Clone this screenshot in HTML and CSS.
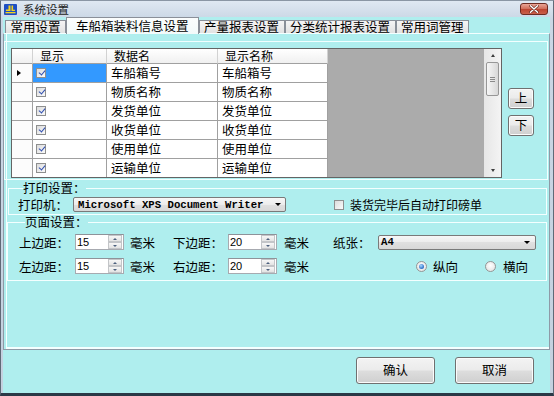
FILE: index.html
```html
<!DOCTYPE html>
<html lang="zh-CN">
<head>
<meta charset="utf-8">
<title>系统设置</title>
<link rel="stylesheet" href="styles.css">
</head>
<body>
<div class="window">
  <div class="titlebar">
    <svg class="app-icon" viewBox="0 0 13 11" width="13" height="11">
      <rect width="13" height="11" rx="1" fill="#1d4fc4"/>
      <path d="M4.5 1.5h2v5.5H2V5.6h2.5z" fill="#f4d41c"/>
      <path d="M7.5 1.5h1.6v4.2H11v1.3H7.5z" fill="#f4d41c"/>
      <rect x="1.5" y="8" width="10" height="1.3" fill="#f4d41c"/>
    </svg>
    <span class="title">系统设置</span>
    <div class="close-btn">
      <svg viewBox="0 0 10 8" width="10" height="8"><path d="M1.5 0.8l7 6.4M8.5 0.8l-7 6.4" stroke="#5a1e16" stroke-width="2.6" stroke-linecap="round"/><path d="M1.5 0.8l7 6.4M8.5 0.8l-7 6.4" stroke="#ffffff" stroke-width="1.5" stroke-linecap="round"/></svg>
    </div>
  </div>
  <div class="client">
    <div class="tabs">
      <div class="tab">常用设置</div>
      <div class="tab active">车船箱装料信息设置</div>
      <div class="tab">产量报表设置</div>
      <div class="tab">分类统计报表设置</div>
      <div class="tab">常用词管理</div>
    </div>
    <div class="tab-panel">
      <div class="grid-box">
        <div class="datagrid">
          <div class="dg-area">
            <div class="dg-table">
              <div class="hcell rowhead"></div>
              <div class="hcell">显示</div>
              <div class="hcell">数据名</div>
              <div class="hcell">显示名称</div>

              <div class="cell rowhead"><span class="row-arrow"></span></div>
              <div class="cell chk selected"><span class="cbox checked"></span></div>
              <div class="cell">车船箱号</div>
              <div class="cell">车船箱号</div>

              <div class="cell rowhead"></div>
              <div class="cell chk"><span class="cbox checked"></span></div>
              <div class="cell">物质名称</div>
              <div class="cell">物质名称</div>

              <div class="cell rowhead"></div>
              <div class="cell chk"><span class="cbox checked"></span></div>
              <div class="cell">发货单位</div>
              <div class="cell">发货单位</div>

              <div class="cell rowhead"></div>
              <div class="cell chk"><span class="cbox checked"></span></div>
              <div class="cell">收货单位</div>
              <div class="cell">收货单位</div>

              <div class="cell rowhead"></div>
              <div class="cell chk"><span class="cbox checked"></span></div>
              <div class="cell">使用单位</div>
              <div class="cell">使用单位</div>

              <div class="cell rowhead"></div>
              <div class="cell chk"><span class="cbox checked"></span></div>
              <div class="cell">运输单位</div>
              <div class="cell">运输单位</div>
            </div>
          </div>
          <div class="vscroll">
            <div class="sb-btn"><span class="tri-up"></span></div>
            <div class="sb-thumb"><span></span><span></span><span></span></div>
            <div class="sb-track"></div>
            <div class="sb-btn"><span class="tri-down"></span></div>
          </div>
        </div>
        <div class="order-btns">
          <button class="btn btn-small">上</button>
          <button class="btn btn-small">下</button>
        </div>
      </div>

      <fieldset class="group print-group">
        <legend>打印设置：</legend>
        <div class="print-row">
          <span class="lbl lbl-printer">打印机：</span>
          <div class="combo combo-printer"><span class="combo-text">Microsoft XPS Document Writer</span><span class="combo-arrow"></span></div>
          <span class="cbox plain"></span>
          <span class="chk-label">装货完毕后自动打印磅单</span>
        </div>
      </fieldset>

      <fieldset class="group page-group">
        <legend>页面设置：</legend>
        <div class="page-row">
          <span class="lbl w56">上边距：</span>
          <div class="spin"><span class="spin-val">15</span><span class="spin-btns"><span class="sp-up"></span><span class="sp-down"></span></span></div>
          <span class="unit u1">毫米</span>
          <span class="lbl w55">下边距：</span>
          <div class="spin"><span class="spin-val">20</span><span class="spin-btns"><span class="sp-up"></span><span class="sp-down"></span></span></div>
          <span class="unit u2">毫米</span>
          <span class="lbl w45">纸张：</span>
          <div class="combo combo-paper"><span class="combo-text">A4</span><span class="combo-arrow"></span></div>
        </div>
        <div class="page-row row2">
          <span class="lbl w56">左边距：</span>
          <div class="spin"><span class="spin-val">15</span><span class="spin-btns"><span class="sp-up"></span><span class="sp-down"></span></span></div>
          <span class="unit u1">毫米</span>
          <span class="lbl w55">右边距：</span>
          <div class="spin"><span class="spin-val">20</span><span class="spin-btns"><span class="sp-up"></span><span class="sp-down"></span></span></div>
          <span class="unit u2">毫米</span>
          <span class="radio-opt opt1"><span class="radio on"></span>纵向</span>
          <span class="radio-opt opt2"><span class="radio"></span>横向</span>
        </div>
      </fieldset>
    </div>
    <div class="footer">
      <button class="btn btn-big">确认</button>
      <button class="btn btn-big">取消</button>
    </div>
  </div>
</div>
</body>
</html>
```
FILE: styles.css
```css
* { box-sizing: border-box; }
html, body { margin: 0; padding: 0; }
body {
  width: 554px;
  height: 396px;
  overflow: hidden;
  font-family: "Noto Sans CJK SC", "Noto Sans", sans-serif;
  font-size: 12.5px;
  color: #000;
  background: #afeeee;
}

.window {
  width: 554px;
  height: 396px;
  display: flex;
  flex-direction: column;
  background: linear-gradient(#dfe8f2, #cad7e5 18px, #c4d1df);
  border-top: 1px solid #8a96a4;
  border-left: 1px solid #5f6a77;
  border-right: 1px solid #5f6a77;
  border-bottom: 3px solid #2b3846;
  padding: 0 3px 0 2px;
}

/* title bar */
.titlebar {
  flex: none;
  height: 16px;
  display: flex;
  align-items: center;
}
.app-icon { margin-left: 1px; flex: none; }
.title {
  margin-left: 6px;
  font-size: 11.5px;
  line-height: 14px;
  color: #1b1b1b;
}
.close-btn {
  margin-left: auto;
  margin-right: 2px;
  width: 28px;
  height: 12px;
  border: 1px solid #6e2b22;
  border-radius: 3px;
  background: linear-gradient(#eaa596, #d2725f 45%, #be4632 55%, #c9604b);
  display: flex;
  align-items: center;
  justify-content: center;
}

/* client */
.client {
  flex: 1;
  background: #afeeee;
  display: flex;
  flex-direction: column;
}

/* tabs */
.tabs {
  flex: none;
  height: 16px;
  display: flex;
  align-items: flex-end;
  padding-left: 2px;
  position: relative;
  z-index: 1;
}
.tab {
  height: 13px;
  border: 1px solid #8a9099;
  border-bottom: none;
  background: linear-gradient(#f5f5f5, #e2e2e2);
  padding: 0 4.5px;
  font-size: 12.5px;
  line-height: 12px;
  white-space: nowrap;
}
.tab.active {
  height: 17px;
  margin-bottom: -1px;
  padding: 0 9px;
  line-height: 15px;
  background: linear-gradient(#fbfdfd, #f2fafa);
}

.tab-panel {
  flex: none;
  height: 317px;
  border: 1px solid #8e9aa7;
  border-top-color: #f4ffff;
  box-shadow: inset 2px 0 0 #afeeee, inset 3px 0 0 #f4ffff, inset 0 -2px 0 #f4ffff;
  padding-top: 7px;
}

/* grid box */
.grid-box {
  height: 139px;
  margin-right: 1px;
  border: 1px solid #f2ffff;
  display: flex;
  align-items: flex-start;
  padding: 6px 0 0 6px;
}
.datagrid {
  flex: none;
  width: 491px;
  height: 130px;
  border: 1px solid #646464;
  display: flex;
}
.dg-area {
  flex: 1;
  background: #ababab;
}
.dg-table {
  display: grid;
  grid-template-columns: 21px 74px 111px 110px;
  grid-template-rows: 15px repeat(5, 19px) 18px;
  width: 316px;
}
.hcell {
  background: linear-gradient(#ffffff, #f0f0f0);
  border-right: 1px solid #d2d2d2;
  border-bottom: 1px solid #a0a0a0;
  font-size: 12px;
  line-height: 14px;
  padding-left: 7px;
  white-space: nowrap;
}
.cell {
  background: #fff;
  border-right: 1px solid #a0a0a0;
  border-bottom: 1px solid #a0a0a0;
  line-height: 18px;
  padding-left: 4px;
  white-space: nowrap;
}
.cell:nth-last-child(-n+4) { border-bottom: none; }
.rowhead {
  padding-left: 0;
  background: #fcfcfc;
  display: flex;
  align-items: center;
}
.hcell.rowhead { background: linear-gradient(#ffffff, #f0f0f0); }
.row-arrow {
  margin-left: 5px;
  width: 0;
  height: 0;
  border-top: 3.5px solid transparent;
  border-bottom: 3.5px solid transparent;
  border-left: 4px solid #000;
}
.cell.chk {
  padding-left: 3px;
  display: flex;
  align-items: center;
}
.cell.selected { background: #3399ff; }

.cbox {
  display: inline-block;
  width: 10px;
  height: 10px;
  border: 1px solid #8e8f8f;
  background: linear-gradient(135deg, #dcdcdc, #fafafa);
  position: relative;
  flex: none;
}
.cbox.checked::after {
  content: "";
  position: absolute;
  left: 2.5px;
  top: 0px;
  width: 3px;
  height: 5px;
  border-right: 1.6px solid #2f4fb0;
  border-bottom: 1.6px solid #2f4fb0;
  transform: rotate(40deg);
}

/* scrollbar */
.vscroll {
  flex: none;
  width: 17px;
  background: linear-gradient(90deg, #e6e6e6, #f4f4f4);
  display: flex;
  flex-direction: column;
  align-items: center;
}
.sb-btn {
  height: 13px;
  width: 17px;
  display: flex;
  align-items: center;
  justify-content: center;
  flex: none;
}
.tri-up, .tri-down {
  width: 0;
  height: 0;
  border-left: 2.5px solid transparent;
  border-right: 2.5px solid transparent;
}
.tri-up { border-bottom: 3px solid #3d3d3d; }
.tri-down { border-top: 3px solid #3d3d3d; }
.sb-thumb {
  flex: none;
  width: 13px;
  height: 34px;
  border: 1px solid #979797;
  border-radius: 2px;
  background: linear-gradient(90deg, #f6f6f6, #e4e4e4 60%, #d8d8d8);
  display: flex;
  flex-direction: column;
  justify-content: center;
  align-items: center;
  gap: 1px;
}
.sb-thumb span {
  width: 5px;
  height: 1px;
  background: #8a8a8a;
}
.sb-track { flex: 1; }

/* buttons */
.btn {
  font-family: "Noto Sans CJK SC", sans-serif;
  font-size: 12.5px;
  color: #000;
  padding: 0;
  border: 1px solid #707070;
  border-radius: 3px;
  background: linear-gradient(#f3f3f3, #ebebeb 48%, #dddddd 52%, #cfcfcf);
  box-shadow: inset 0 0 0 1px #fbfbfb;
  line-height: 1;
}
.order-btns {
  display: flex;
  flex-direction: column;
  gap: 6px;
  margin: 40px 0 0 6px;
}
.btn-small { width: 26px; height: 21px; }
.btn-big { width: 79px; height: 27px; }

/* group boxes */
.group {
  border: 1px solid #f4ffff;
  margin: 0;
  padding: 0;
  min-width: 0;
}
.group legend {
  padding: 0;
  font-size: 12.5px;
  line-height: 14px;
}
.print-group {
  margin: 1px 2px 0 4px;
  padding: 2px 0 2px 9px;
}
.print-group legend { margin-left: 5px; }
.page-group {
  margin: 0 2px 0 3px;
  padding: 5px 0 6px 11px;
}
.page-group legend { margin-left: 6px; }

.print-row {
  display: flex;
  align-items: center;
  height: 15px;
}
.lbl { white-space: nowrap; flex: none; }
.lbl-printer { width: 55px; }

.combo {
  flex: none;
  height: 15px;
  border: 1px solid #7a7a7a;
  border-radius: 2px;
  background: linear-gradient(#f7f7f7, #ececec 50%, #e0e0e0 50%, #d8d8d8);
  display: flex;
  align-items: center;
  padding: 0 4px 0 4px;
}
.combo-text {
  font-family: "Liberation Mono", "Courier New", monospace;
  font-weight: bold;
  font-size: 10.67px;
  line-height: 12px;
  white-space: nowrap;
}
.combo-arrow {
  margin-left: auto;
  width: 0;
  height: 0;
  border-left: 3px solid transparent;
  border-right: 3px solid transparent;
  border-top: 3px solid #000;
}
.combo-printer { width: 213px; }
.combo-paper { width: 158px; padding-left: 2px; padding-right: 5px; }

.cbox.plain { margin-left: 48px; }
.chk-label { margin-left: 6px; font-size: 12px; white-space: nowrap; }

.page-row {
  display: flex;
  align-items: center;
  height: 16px;
}
.page-row.row2 { margin-top: 8px; }
.w56 { width: 56px; }
.w55 { width: 55px; }
.w45 { width: 45px; }
.unit { flex: none; white-space: nowrap; }
.unit.u1 { margin-left: 6px; width: 43px; }
.unit.u2 { margin-left: 7px; width: 49px; }

.spin {
  flex: none;
  width: 49px;
  height: 16px;
  border: 1px solid #a7aab0;
  border-top-color: #8e9299;
  background: #fff;
  display: flex;
  align-items: center;
  padding-left: 1px;
}
.spin-val {
  font-family: "Liberation Sans", "DejaVu Sans", sans-serif;
  font-size: 11px;
  line-height: 12px;
}
.spin-btns {
  margin-left: auto;
  margin-right: 1px;
  width: 14px;
  height: 14px;
  display: flex;
  flex-direction: column;
}
.sp-up, .sp-down {
  flex: 1;
  border: 1px solid #c3c5c8;
  background: linear-gradient(#f7f7f7, #e3e3e3);
  display: flex;
  align-items: center;
  justify-content: center;
}
.sp-up::after, .sp-down::after {
  content: "";
  width: 0;
  height: 0;
  border-left: 2.5px solid transparent;
  border-right: 2.5px solid transparent;
}
.sp-up::after { border-bottom: 2.5px solid #4c607e; }
.sp-down::after { border-top: 2.5px solid #4c607e; }

.radio-opt {
  display: flex;
  align-items: center;
  gap: 6px;
  white-space: nowrap;
  flex: none;
}
.radio-opt.opt1 { margin-left: 83px; }
.radio-opt.opt2 { margin-left: 27px; gap: 7px; }
.radio {
  width: 11px;
  height: 11px;
  border-radius: 50%;
  border: 1px solid #959595;
  background: radial-gradient(circle at 50% 40%, #ffffff, #dedede);
  display: flex;
  align-items: center;
  justify-content: center;
}
.radio.on::after {
  content: "";
  width: 5px;
  height: 5px;
  border-radius: 50%;
  background: radial-gradient(circle at 40% 35%, #a9d8ff, #2b6fc7 70%, #1d4f99);
}

.footer {
  flex: 1;
  display: flex;
  justify-content: flex-end;
  align-items: flex-start;
  gap: 20px;
  padding: 7px 16px 0 0;
}
```
